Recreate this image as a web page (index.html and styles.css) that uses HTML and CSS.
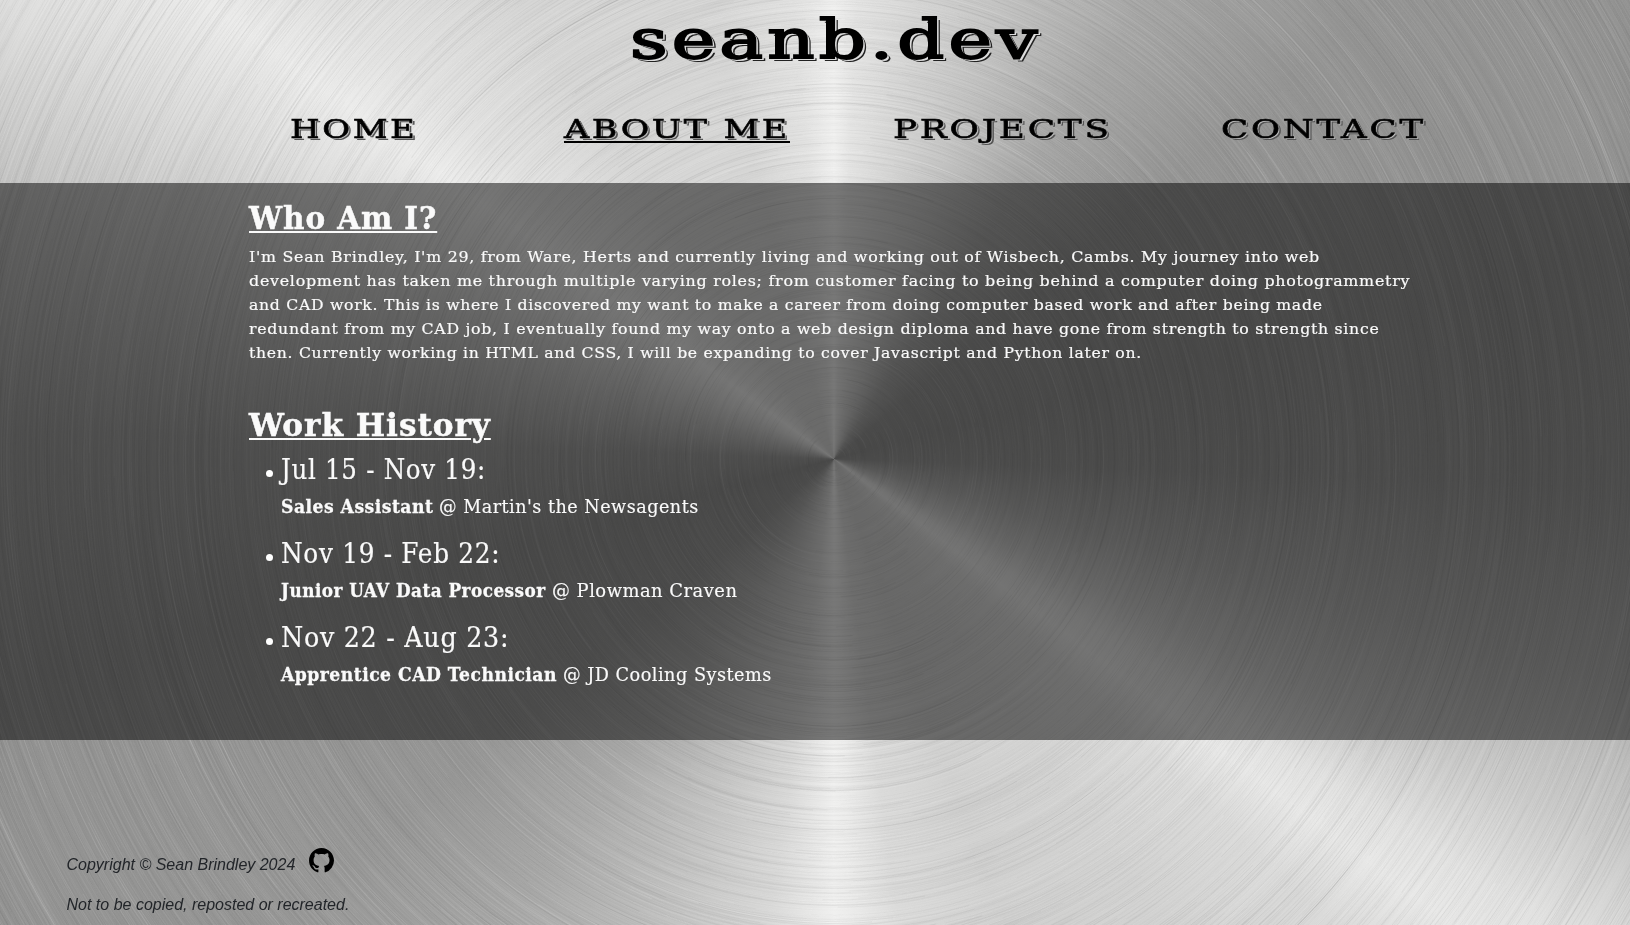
FILE: index.html
```html
<!DOCTYPE html>
<html lang="en">
<head>
<meta charset="utf-8">
<title>seanb.dev - About Me</title>
<link rel="stylesheet" href="styles.css">
</head>
<body>
<canvas class="metal" width="1630" height="925"></canvas>
<header class="header">
  <h1 class="logo"><span class="logo-text" data-w="411">seanb.dev</span></h1>
  <nav class="nav">
    <a class="nav-link"><span data-w="128">HOME</span></a>
    <a class="nav-link active"><span data-w="226">ABOUT ME</span></a>
    <a class="nav-link"><span data-w="219">PROJECTS</span></a>
    <a class="nav-link"><span data-w="205">CONTACT</span></a>
  </nav>
</header>
<main class="main">
  <h2 class="title"><span data-w="188">Who Am I?</span></h2>
  <p class="bio">
    <span class="line" data-w="1071">I'm Sean Brindley, I'm 29, from Ware, Herts and currently living and working out of Wisbech, Cambs. My journey into web</span>
    <span class="line" data-w="1161">development has taken me through multiple varying roles; from customer facing to being behind a computer doing photogrammetry</span>
    <span class="line" data-w="1074">and CAD work. This is where I discovered my want to make a career from doing computer based work and after being made</span>
    <span class="line" data-w="1131">redundant from my CAD job, I eventually found my way onto a web design diploma and have gone from strength to strength since</span>
    <span class="line" data-w="893">then. Currently working in HTML and CSS, I will be expanding to cover Javascript and Python later on.</span>
  </p>
  <h2 class="title"><span data-w="242">Work History</span></h2>
  <ul class="jobs">
    <li><div class="dates"><span data-w="205">Jul 15 - Nov 19:</span></div><p class="role"><b data-w="152">Sales Assistant</b><span data-w="260">@ Martin's the Newsagents</span></p></li>
    <li><div class="dates"><span data-w="219">Nov 19 - Feb 22:</span></div><p class="role"><b data-w="265">Junior UAV Data Processor</b><span data-w="185">@ Plowman Craven</span></p></li>
    <li><div class="dates"><span data-w="228">Nov 22 - Aug 23:</span></div><p class="role"><b data-w="276">Apprentice CAD Technician</b><span data-w="209">@ JD Cooling Systems</span></p></li>
  </ul>
</main>
<footer class="footer">
  <p class="copy">Copyright © Sean Brindley 2024
    <svg class="github" viewBox="0 0 16 16"><path d="M8 0C3.58 0 0 3.58 0 8c0 3.54 2.29 6.53 5.47 7.59.4.07.55-.17.55-.38 0-.19-.01-.82-.01-1.49-2.01.37-2.53-.49-2.69-.94-.09-.23-.48-.94-.82-1.13-.28-.15-.68-.52-.01-.53.63-.01 1.08.58 1.23.82.72 1.21 1.87.87 2.33.66.07-.52.28-.87.51-1.07-1.78-.2-3.64-.89-3.64-3.95 0-.87.31-1.59.82-2.15-.08-.2-.36-1.02.08-2.12 0 0 .67-.21 2.2.82.64-.18 1.32-.27 2-.27s1.36.09 2 .27c1.53-1.04 2.2-.82 2.2-.82.44 1.1.16 1.92.08 2.12.51.56.82 1.27.82 2.15 0 3.07-1.87 3.75-3.65 3.95.29.25.54.73.54 1.48 0 1.07-.01 1.93-.01 2.2 0 .21.15.46.55.38A8.01 8.01 0 0 0 16 8c0-4.42-3.58-8-8-8z"/></svg>
  </p>
  <p class="notice">Not to be copied, reposted or recreated.</p>
</footer>
<script src="script.js"></script>
</body>
</html>
```
FILE: styles.css
```css
* { box-sizing: border-box; }
body {
  margin: 0;
  height: 925px;
  overflow: hidden;
  display: flex;
  flex-direction: column;
  font-family: "DejaVu Serif", serif;
  color: #fafafa;
  background: #b8b8b6;
}
h1, h2, p, ul { margin: 0; padding: 0; }
span, b { white-space: nowrap; }
.metal { position: absolute; inset: 0; z-index: -1; }
.header { height: 183px; flex: none; color: #000; }
.logo {
  height: 84px;
  padding-left: 630px;
  font-size: 54px;
  line-height: 80px;
  font-weight: 400;
  letter-spacing: 3px;
  -webkit-text-stroke: 1.8px #000;
  text-shadow: 1px 1px #ddd, 2px 2px #ddd, 3px 3px #222;
}
.logo-text, .nav-link span, .title span, .line, .dates span, .role b, .role span {
  display: inline-block;
  transform-origin: 0 50%;
}
.nav { display: grid; grid-template-columns: 274px 329px 328px 1fr; padding-left: 290px; }
.nav-link {
  height: 54px;
  padding-top: 29px;
  font-size: 26px;
  line-height: 32px;
  letter-spacing: 2px;
  -webkit-text-stroke: 0.6px #050505;
  text-shadow: 1px 1px #bbb, 2px 2px #555;
}
.nav-link span { height: 30px; }
.active span { border-bottom: 2px solid #000; }
.main {
  flex: none;
  height: 557px;
  padding: 13px 0 0 249px;
  background: rgba(0, 0, 0, 0.5);
}
.title { height: 48px; font-size: 32px; line-height: 44px; letter-spacing: 1px; -webkit-text-stroke: 0.5px #fafafa; }
.title span { text-decoration: underline; text-decoration-thickness: 2px; text-underline-offset: 2px; }
.bio { height: 159px; padding-top: 1px; font-size: 15.5px; line-height: 24px; letter-spacing: 0.7px; -webkit-text-stroke: 0.2px #fafafa; }
.line { display: block; width: max-content; }
.jobs { padding-left: 32px; list-style: none; }
.jobs li { position: relative; height: 84px; }
.jobs li::before { content: ""; position: absolute; left: -15px; top: 19px; width: 7px; height: 7px; border-radius: 50%; background: #fff; }
.dates { height: 40px; padding-top: 2px; font-size: 28.5px; line-height: 34px; letter-spacing: 0.8px; -webkit-text-stroke: 0.2px #fafafa; }
.role { display: flex; gap: 6px; font-size: 18px; line-height: 32px; letter-spacing: 0.5px; }
.role b { -webkit-text-stroke: 0.3px #fafafa; }
.role span { -webkit-text-stroke: 0.15px #fafafa; }
.footer { padding: 105px 0 0 66.5px; font: italic 16px/40px "Liberation Sans", sans-serif; color: #222529; }
.copy { display: flex; gap: 14px; height: 40px; }
.github { width: 25px; height: 25px; margin-top: 3px; fill: #000; }
```
FILE: script.js
```js
// Brushed metal disc: angular sheen plus fine concentric grooves.
const canvas = document.querySelector(".metal");
const ctx = canvas.getContext("2d");
const cx = 834, cy = 459;
const stops = [[0, 240], [3, 228], [10, 214], [20, 196], [34, 166], [50, 148], [75, 144], [92, 150], [106, 176], [116, 202], [123, 226], [127, 232], [133, 218], [145, 210], [160, 208], [172, 218], [178, 236], [180, 240], [182, 234], [188, 216], [200, 194], [215, 168], [230, 150], [255, 144], [272, 156], [286, 190], [298, 220], [306, 236], [312, 226], [325, 214], [345, 214], [355, 226], [360, 240]];
const sheen = ctx.createConicGradient(-Math.PI / 2, cx, cy);
stops.forEach(([a, v]) => sheen.addColorStop(a / 360, `rgb(${v},${v},${v - 1})`));
ctx.fillStyle = sheen;
ctx.fillRect(0, 0, 1630, 925);
let seed = 7;
const rand = () => (seed = (seed * 16807) % 2147483647) / 2147483647;
for (let i = 0; i < 16000; i++) {
  const r = Math.pow(rand(), 0.75) * 960;
  const start = rand() * Math.PI * 2;
  const tone = rand() < 0.53 ? 255 : 100;
  ctx.strokeStyle = `rgba(${tone},${tone},${tone},${0.02 + rand() * rand() * 0.09})`;
  ctx.lineWidth = 0.4 + rand() * 0.7;
  ctx.beginPath();
  ctx.arc(cx, cy, r, start, start + 0.3 + rand() * 1.2);
  ctx.stroke();
}

document.querySelectorAll("[data-w]").forEach((el) => {
  const target = Number(el.dataset.w);
  const width = el.offsetWidth;
  el.style.transform = `scaleX(${target / width})`;
  el.style.marginRight = `${target - width}px`;
});
```
